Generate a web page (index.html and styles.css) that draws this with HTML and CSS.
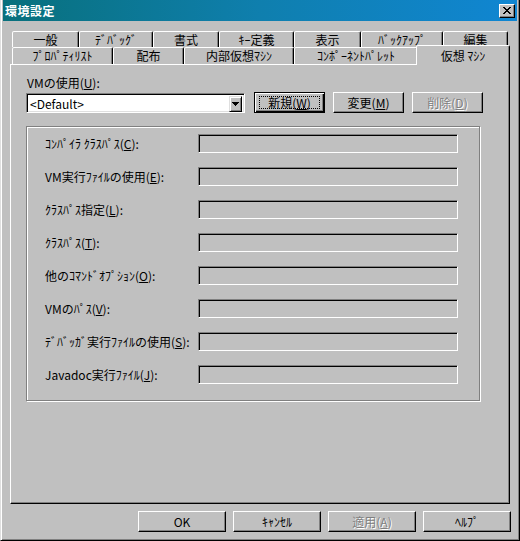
FILE: index.html
```html
<!DOCTYPE html>
<html lang="ja">
<head>
<meta charset="utf-8">
<title>環境設定</title>
<link rel="stylesheet" href="styles.css">
</head>
<body>
<div class="window">
  <div class="titlebar">
    <span class="title">環境設定</span>
    <button class="close" aria-label="閉じる"><svg width="8" height="7" viewBox="0 0 8 7" shape-rendering="crispEdges"><path d="M0 0h2v1H0zM6 0h2v1H6zM1 1h2v1H1zM5 1h2v1H5zM2 2h4v1H2zM3 3h2v1H3zM2 4h4v1H2zM1 5h2v1H1zM5 5h2v1H5zM0 6h2v1H0zM6 6h2v1H6z" fill="#000"/></svg></button>
  </div>
  <div class="content">
    <div class="tabs">
      <div class="tabrow row1">
        <div class="tab">一般</div>
        <div class="tab">ﾃﾞﾊﾞｯｸﾞ</div>
        <div class="tab">書式</div>
        <div class="tab">ｷｰ定義</div>
        <div class="tab">表示</div>
        <div class="tab">ﾊﾞｯｸｱｯﾌﾟ</div>
        <div class="tab">編集</div>
      </div>
      <div class="tabrow row2">
        <div class="tab">ﾌﾟﾛﾊﾟﾃｨﾘｽﾄ</div>
        <div class="tab">配布</div>
        <div class="tab">内部仮想ﾏｼﾝ</div>
        <div class="tab">ｺﾝﾎﾟｰﾈﾝﾄﾊﾟﾚｯﾄ</div>
        <div class="tab selected">仮想 ﾏｼﾝ</div>
      </div>
    </div>
    <div class="panel">
      <div class="vm-label">VMの使用(<u>U</u>):</div>
      <div class="vm-row">
        <div class="combo">
          <span class="combo-text">&lt;Default&gt;</span>
          <span class="drop"><svg width="7" height="4" viewBox="0 0 7 4" shape-rendering="crispEdges"><path d="M0 0h7v1H0zM1 1h5v1H1zM2 2h3v1H2zM3 3h1v1H3z" fill="#000"/></svg></span>
        </div>
        <button class="btn small default"><span class="focus">新規(<u>W</u>)</span></button>
        <button class="btn small">変更(<u>M</u>)</button>
        <button class="btn small disabled">削除(<u>D</u>)</button>
      </div>
      <div class="group">
        <div class="field-row"><span class="label">ｺﾝﾊﾟｲﾗ ｸﾗｽﾊﾟｽ(<u>C</u>):</span><span class="field"></span></div>
        <div class="field-row"><span class="label">VM実行ﾌｧｲﾙの使用(<u>E</u>):</span><span class="field"></span></div>
        <div class="field-row"><span class="label">ｸﾗｽﾊﾟｽ指定(<u>L</u>):</span><span class="field"></span></div>
        <div class="field-row"><span class="label">ｸﾗｽﾊﾟｽ(<u>T</u>):</span><span class="field"></span></div>
        <div class="field-row"><span class="label">他のｺﾏﾝﾄﾞｵﾌﾟｼｮﾝ(<u>O</u>):</span><span class="field"></span></div>
        <div class="field-row"><span class="label">VMのﾊﾟｽ(<u>V</u>):</span><span class="field"></span></div>
        <div class="field-row spaced"><span class="label">ﾃﾞﾊﾞｯｶﾞ実行ﾌｧｲﾙの使用(<u>S</u>):</span><span class="field"></span></div>
        <div class="field-row"><span class="label">Javadoc実行ﾌｧｲﾙ(<u>J</u>):</span><span class="field"></span></div>
      </div>
    </div>
    <div class="footer">
      <button class="btn wide">OK</button>
      <button class="btn wide">ｷｬﾝｾﾙ</button>
      <button class="btn wide disabled">適用(<u>A</u>)</button>
      <button class="btn wide">ﾍﾙﾌﾟ</button>
    </div>
  </div>
</div>
</body>
</html>
```
FILE: styles.css
```css
* { box-sizing: border-box; }
html, body { margin: 0; padding: 0; background: #c0c0c0; }
body {
  font-family: "Noto Sans CJK JP", "Noto Sans", sans-serif;
  font-size: 12px;
  color: #000;
}
u { text-decoration: underline; text-underline-offset: 1px; }

.window {
  width: 520px;
  height: 541px;
  background: #c0c0c0;
  border-style: solid;
  border-width: 0 1px 1px 1px;
  border-color: #dfdfdf #000 #000 #dfdfdf;
  box-shadow: inset 1px 0 #fff, inset -1px -1px #808080;
  padding: 0 2px;
  display: flex;
  flex-direction: column;
}

.titlebar {
  height: 21px;
  background: linear-gradient(to right, #08707c, #0f7fae 50%, #1086d2);
  display: flex;
  align-items: center;
  justify-content: space-between;
  padding: 0 2px;
}
.title {
  color: #fff;
  font-weight: bold;
  font-size: 12px;
  letter-spacing: 0.5px;
  line-height: 14px;
}
.close {
  width: 16px;
  height: 14px;
  padding: 0;
  margin: 0;
  background: #c0c0c0;
  border: 1px solid;
  border-color: #fff #000 #000 #fff;
  box-shadow: inset -1px -1px #808080;
  display: flex;
  align-items: center;
  justify-content: center;
}
.close svg { display: block; }

.content { padding: 10px 7px 0; }

.tabs { margin: 0 2px; }
.tabrow { display: grid; }
.row1 { grid-template-columns: 67px 74px 66px 75px 67px 82px 65px; height: 16px; }
.row2 { grid-template-columns: 101px 71px 110px 124px 90px; height: 17px; }
.tab {
  background: #c0c0c0;
  border-style: solid;
  border-width: 1px 1px 0 1px;
  border-color: #fff #000 transparent #fff;
  border-radius: 2px 2px 0 0;
  box-shadow: inset -1px 0 #808080;
  display: flex;
  align-items: center;
  justify-content: center;
  line-height: 14px;
  white-space: nowrap;
}
.tab.selected {
  position: relative;
  z-index: 1;
  margin: -2px -2px -1px -2px;
}

.panel {
  height: 440px;
  border: 1px solid;
  border-color: #fff #000 #000 #fff;
  box-shadow: inset -1px -1px #808080;
  padding: 11px 0 0 15px;
}
.vm-label { height: 14px; line-height: 14px; padding-left: 1px; }
.vm-row {
  display: flex;
  align-items: flex-start;
  gap: 8px;
  margin-top: 2px;
  height: 21px;
}
.combo {
  width: 219px;
  height: 20px;
  margin-top: 1px;
  margin-right: 1px;
  background: #fff;
  border: 1px solid;
  border-color: #808080 #fff #fff #808080;
  box-shadow: inset 1px 1px #000, inset -1px -1px #dfdfdf;
  padding: 2px;
  display: flex;
}
.combo-text { flex: 1; line-height: 16px; padding-left: 1px; }
.drop {
  width: 13px;
  height: 16px;
  background: #c0c0c0;
  border: 1px solid;
  border-color: #dfdfdf #000 #000 #dfdfdf;
  box-shadow: inset 1px 1px #fff, inset -1px -1px #808080;
  display: flex;
  align-items: center;
  justify-content: center;
}
.drop svg { display: block; }

.btn {
  font: inherit;
  color: #000;
  background: #c0c0c0;
  height: 21px;
  padding: 0;
  margin: 0;
  border: 1px solid;
  border-color: #fff #000 #000 #fff;
  box-shadow: inset -1px -1px #808080;
  display: flex;
  align-items: center;
  justify-content: center;
  line-height: 14px;
  white-space: nowrap;
}
.btn.small { width: 71px; }
.btn.wide { width: 88px; }
.btn.default {
  border-color: #000;
  box-shadow: inset 1px 1px #fff, inset -1px -1px #000, inset -2px -2px #808080;
  padding: 3px 4px;
  align-items: stretch;
}
.focus {
  flex: 1;
  border: 1px dotted #000;
  display: flex;
  align-items: center;
  justify-content: center;
}
.btn.disabled { color: #808080; text-shadow: 1px 1px 0 #fff; }

.group {
  width: 454px;
  height: 275px;
  margin-top: 13px;
  border: 1px solid #808080;
  box-shadow: 1px 1px 0 #fff, inset 1px 1px 0 #fff;
  padding: 7px 0 0 18px;
}
.field-row {
  display: flex;
  align-items: center;
  height: 19px;
  margin-bottom: 14px;
}
.field-row.spaced { margin-top: 7px; }
.label { width: 153px; line-height: 14px; white-space: nowrap; }
.field {
  width: 260px;
  height: 19px;
  border: 1px solid;
  border-color: #808080 #fff #fff #808080;
  box-shadow: inset 1px 1px #000, inset -1px -1px #c0c0c0;
}

.footer {
  display: flex;
  justify-content: flex-end;
  gap: 7px;
  margin-top: 7px;
  margin-right: -1px;
}
```
